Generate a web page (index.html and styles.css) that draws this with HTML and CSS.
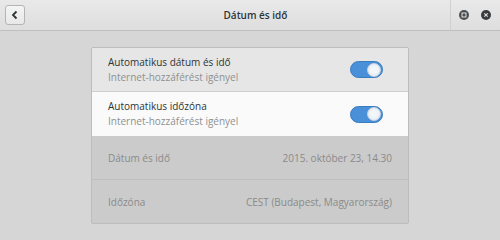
FILE: index.html
```html
<!DOCTYPE html>
<html lang="hu">
<head>
<meta charset="UTF-8" />
<title>Dátum és idő</title>
<link rel="stylesheet" href="styles.css">
</head>
<body>

<header class="fejlec">
  <button class="vissza" aria-label="Vissza">
    <svg width="10" height="10" viewBox="0 0 10 10"><path d="M6.5 1.5 L3 5 L6.5 8.5" fill="none" stroke="#2e3436" stroke-width="1.8"/></svg>
  </button>
  <div class="cim">Dátum és idő</div>
  <div class="ablak-gombok">
    <span class="gomb">
      <svg width="10" height="10" viewBox="0 0 10 10"><circle cx="5" cy="5" r="5" fill="#4a4d4f"/><rect x="3" y="3" width="4" height="4" fill="none" stroke="#e0e0e0" stroke-width="1"/></svg>
    </span>
    <span class="gomb">
      <svg width="10" height="10" viewBox="0 0 10 10"><circle cx="5" cy="5" r="5" fill="#3a3d3f"/><path d="M3.3 3.3 L6.7 6.7 M6.7 3.3 L3.3 6.7" stroke="#e0e0e0" stroke-width="1.1"/></svg>
    </span>
  </div>
</header>

<main>
  <section class="lista">
    <div class="sor kijelolt">
      <div class="szoveg">
        <div class="fo">Automatikus dátum és idő</div>
        <div class="al">Internet-hozzáférést igényel</div>
      </div>
      <span class="kapcsolo"><span class="gomb-kor"></span></span>
    </div>
    <div class="sor feher">
      <div class="szoveg">
        <div class="fo">Automatikus időzóna</div>
        <div class="al">Internet-hozzáférést igényel</div>
      </div>
      <span class="kapcsolo"><span class="gomb-kor"></span></span>
    </div>
    <div class="sor tiltott">
      <span>Dátum és idő</span>
      <span>2015. október 23, 14.30</span>
    </div>
    <div class="sor tiltott">
      <span>Időzóna</span>
      <span>CEST (Budapest, Magyarország)</span>
    </div>
  </section>
</main>

</body>
</html>
```

FILE: styles.css
```css
body {
  font-family: "Open Sans", "DejaVu Sans", sans-serif;
  margin: 0;
  background: #d6d6d6;
  width: 500px;
  height: 240px;
  overflow: hidden;
  color: #2e3436;
}
.fejlec {
  display: flex;
  align-items: center;
  background: linear-gradient(#e9e9e9, #dedede);
  border-bottom: 1px solid #bfbfbf;
  box-sizing: border-box;
  height: 31px;
  padding: 0 0 0 5px;
}
.vissza {
  width: 20px;
  height: 20px;
  padding: 0;
  display: flex;
  align-items: center;
  justify-content: center;
  background: linear-gradient(#f4f4f4, #e8e8e8);
  border: 1px solid #b5b5b5;
  border-radius: 3px;
}
.cim {
  flex: 1;
  text-align: center;
  font-size: 10px;
  font-weight: 600;
  padding-left: 36px;
}
.ablak-gombok {
  display: flex;
  align-items: center;
  gap: 12px;
  height: 30px;
  border-left: 1px solid #d0d0d0;
  padding: 0 9px 0 8px;
}
.gomb {
  display: flex;
}
main {
  padding: 16px 91px 0 91px;
}
.lista {
  border: 1px solid #bdbdbd;
  border-radius: 2px;
  background: #cbcbcb;
}
.sor {
  height: 44px;
  display: flex;
  align-items: center;
  justify-content: space-between;
  padding: 0 25px 0 16px;
  box-sizing: border-box;
  border-bottom: 1px solid #c0c0c0;
}
.sor:last-child {
  border-bottom: none;
  height: 43px;
}
.kijelolt {
  background: #e6e6e6;
  border-bottom-color: #cfcfcf;
}
.feher {
  background: #fafafa;
  border-bottom: none;
}
.fo {
  font-size: 10px;
  line-height: 15px;
}
.al {
  font-size: 10px;
  line-height: 15px;
  color: #8e9192;
}
.tiltott {
  font-size: 10px;
  color: #8a8a8a;
  padding-right: 16px;
}
.kapcsolo {
  width: 33px;
  height: 17px;
  border-radius: 9px;
  background: #4a90d9;
  border: 1px solid #3a7cc2;
  box-sizing: border-box;
  display: flex;
  align-items: center;
  justify-content: flex-end;
  padding-right: 1px;
}
.gomb-kor {
  width: 14px;
  height: 14px;
  border-radius: 50%;
  background: radial-gradient(circle, #f4f7fa 30%, #dde6ee 100%);
  border: 1px solid #c8d4e0;
  box-sizing: border-box;
}
```
